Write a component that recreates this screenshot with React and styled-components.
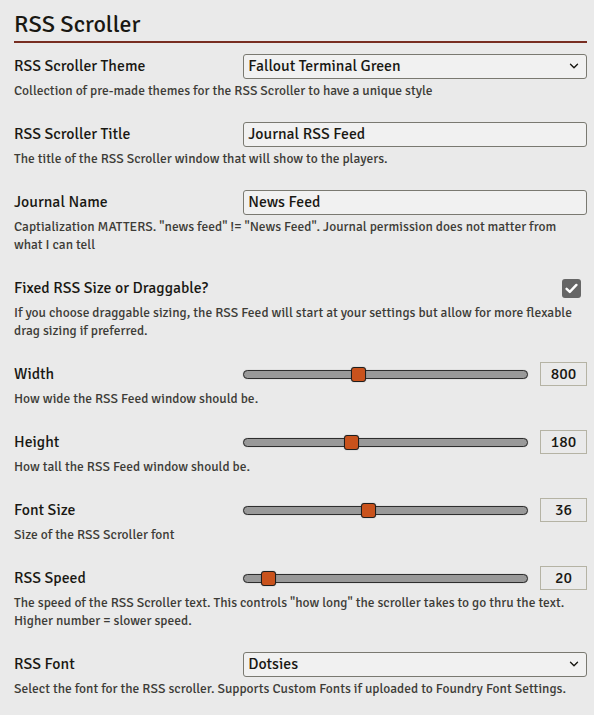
import React from "react";
import styled, { createGlobalStyle } from "styled-components";

const FONT = `"Signika", "Roboto", sans-serif`;
const W = 380;

const Global = createGlobalStyle`
  html, body { margin: 0; padding: 0; background: #eaeaea; }
  body { font-family: ${FONT}; font-weight: ${W}; color: #191813; }
  * { box-sizing: border-box; }
`;

const Page = styled.div`
  width: 594px;
  height: 715px;
  padding: 0 7px 0 14px;
  background: #eaeaea;
  overflow: hidden;
  font-weight: ${W};
`;

const Header = styled.h2`
  margin: 7px 0 0;
  font-family: ${FONT};
  font-weight: ${W};
  font-size: 24px;
  line-height: 34px;
  color: #191813;
  border-bottom: 2px solid #782e22;
`;

const Form = styled.div`
  display: flex;
  flex-direction: column;
  gap: 21px;
  margin-top: 10px;
`;

const Group = styled.div`
  display: flex;
  flex-direction: column;
`;

const Row = styled.div`
  display: flex;
  align-items: center;
  height: 26px;
`;

const Label = styled.label`
  flex: 2;
  font-size: 15.8px;
  font-weight: ${W};
  line-height: 26px;
  color: #191813;
  white-space: nowrap;
`;

const Field = styled.div`
  flex: 3;
  display: flex;
  align-items: center;
  justify-content: ${(p) => (p.$end ? "flex-end" : "flex-start")};
  height: 26px;
  position: relative;
`;

const Notes = styled.p`
  margin: 3px 0 0;
  font-size: 13.5px;
  font-weight: ${W};
  line-height: 18px;
  color: #3d3c37;
`;

const fieldBox = `
  width: 100%;
  height: 25px;
  border: 1px solid #7a7971;
  border-radius: 3px;
  background: rgba(255, 255, 255, 0.35);
  font-family: ${FONT};
  font-weight: ${W};
  font-size: 15.8px;
  color: #191813;
  padding: 0 4px;
  outline: none;
`;

const TextInput = styled.input`
  ${fieldBox}
`;

const Select = styled.select`
  ${fieldBox}
  appearance: none;
  -webkit-appearance: none;
  padding-right: 24px;
`;

const Chevron = styled.svg`
  position: absolute;
  right: 8px;
  top: 50%;
  transform: translateY(-45%);
  pointer-events: none;
`;

const CheckBox = styled.span`
  display: flex;
  align-items: center;
  justify-content: center;
  width: 19px;
  height: 19px;
  margin-right: 6px;
  border-radius: 3px;
  background: #666666;
`;

const Range = styled.input`
  -webkit-appearance: none;
  appearance: none;
  width: 285px;
  height: 16px;
  margin: 0;
  padding: 0;
  background: transparent;

  &::-webkit-slider-runnable-track {
    height: 9px;
    background: #999999;
    border: 1px solid #2e2e2e;
    border-radius: 5px;
    box-shadow: 0 0 1px rgba(0, 0, 0, 0.4);
  }
  &::-webkit-slider-thumb {
    -webkit-appearance: none;
    width: 15px;
    height: 15px;
    margin-top: -4px;
    background: #c9521c;
    border: 1px solid #1e1e1e;
    border-radius: 3px;
    box-shadow: 0 0 1px rgba(0, 0, 0, 0.5);
  }
`;

const RangeValue = styled.span`
  display: flex;
  align-items: center;
  justify-content: center;
  width: 47px;
  height: 24px;
  margin-left: 12px;
  border: 1px solid #b5b3a4;
  font-size: 15.8px;
  font-weight: ${W};
  color: #191813;
`;

const ChevronIcon = () => (
  <Chevron width="10" height="7" viewBox="0 0 10 7">
    <path d="M1.5 1.5 L5 5 L8.5 1.5" fill="none" stroke="#191813" strokeWidth="1.4" strokeLinecap="round" strokeLinejoin="round" />
  </Chevron>
);

const CheckIcon = () => (
  <svg width="13" height="11" viewBox="0 0 13 11">
    <path d="M1.6 5.8 L4.8 8.9 L11.4 1.9" fill="none" stroke="#ffffff" strokeWidth="2.4" strokeLinecap="round" strokeLinejoin="round" />
  </svg>
);

const SelectField = ({ value }) => (
  <Field>
    <Select defaultValue={value}>
      <option>{value}</option>
    </Select>
    <ChevronIcon />
  </Field>
);

const RangeField = ({ frac, value }) => (
  <Field>
    <Range type="range" min="0" max="1000" defaultValue={Math.round(frac * 1000)} />
    <RangeValue>{value}</RangeValue>
  </Field>
);

const Setting = ({ label, notes, children }) => (
  <Group>
    <Row>
      <Label>{label}</Label>
      {children}
    </Row>
    <Notes>{notes}</Notes>
  </Group>
);

export default function App() {
  return (
    <Page>
      <Global />
      <Header>RSS Scroller</Header>
      <Form>
        <Setting label="RSS Scroller Theme" notes="Collection of pre-made themes for the RSS Scroller to have a unique style">
          <SelectField value="Fallout Terminal Green" />
        </Setting>
        <Setting label="RSS Scroller Title" notes="The title of the RSS Scroller window that will show to the players.">
          <Field>
            <TextInput type="text" defaultValue="Journal RSS Feed" />
          </Field>
        </Setting>
        <Setting
          label="Journal Name"
          notes={`Captialization MATTERS. "news feed" != "News Feed". Journal permission does not matter from what I can tell`}
        >
          <Field>
            <TextInput type="text" defaultValue="News Feed" />
          </Field>
        </Setting>
        <Setting
          label="Fixed RSS Size or Draggable?"
          notes="If you choose draggable sizing, the RSS Feed will start at your settings but allow for more flexable drag sizing if preferred."
        >
          <Field $end>
            <CheckBox>
              <CheckIcon />
            </CheckBox>
          </Field>
        </Setting>
        <Setting label="Width" notes="How wide the RSS Feed window should be.">
          <RangeField frac={0.398} value="800" />
        </Setting>
        <Setting label="Height" notes="How tall the RSS Feed window should be.">
          <RangeField frac={0.372} value="180" />
        </Setting>
        <Setting label="Font Size" notes="Size of the RSS Scroller font">
          <RangeField frac={0.435} value="36" />
        </Setting>
        <Setting
          label="RSS Speed"
          notes={`The speed of the RSS Scroller text. This controls "how long" the scroller takes to go thru the text. Higher number = slower speed.`}
        >
          <RangeField frac={0.065} value="20" />
        </Setting>
        <Setting
          label="RSS Font"
          notes="Select the font for the RSS scroller. Supports Custom Fonts if uploaded to Foundry Font Settings."
        >
          <SelectField value="Dotsies" />
        </Setting>
      </Form>
    </Page>
  );
}
